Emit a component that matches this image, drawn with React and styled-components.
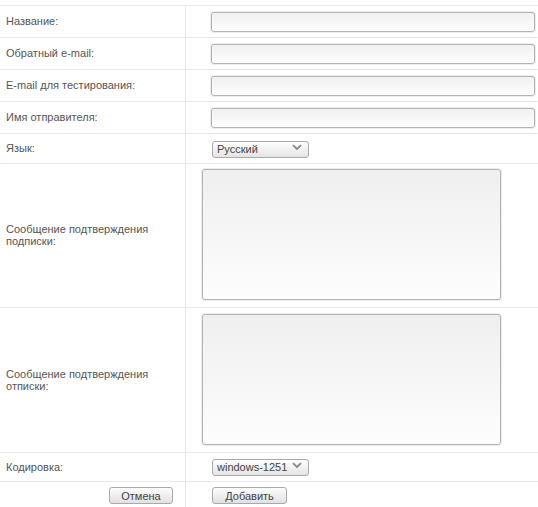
import React from "react";
import styled, { createGlobalStyle } from "styled-components";

const Global = createGlobalStyle`
  html, body { margin: 0; padding: 0; background: #fff; }
  body { font-family: "Liberation Sans", Arial, sans-serif; }
`;

const Form = styled.div`
  padding-top: 5px;
  width: 538px;
`;

const Row = styled.div`
  display: grid;
  grid-template-columns: 186px 1fr;
  height: ${(p) => p.$h}px;
  box-sizing: border-box;
  border-top: 1px solid #e8e8e8;
`;

const Label = styled.div`
  display: flex;
  align-items: center;
  justify-content: ${(p) => (p.$right ? "flex-end" : "flex-start")};
  padding: ${(p) => (p.$right ? "0 12px 0 0" : "0 0 1px 6px")};
  border-right: 1px solid #e8e8e8;
  font-size: 11px;
  line-height: 12px;
  color: #555;
`;

const Field = styled.div`
  display: flex;
  align-items: ${(p) => (p.$top ? "flex-start" : "center")};
  padding-left: ${(p) => p.$pl ?? 25}px;
  padding-top: ${(p) => p.$pt ?? 0}px;
  padding-bottom: ${(p) => p.$pb ?? 0}px;
`;

const TextInput = styled.input`
  box-sizing: border-box;
  width: 324px;
  height: 20px;
  margin: 0;
  border: 1px solid #b3b3b3;
  border-radius: 3px;
  box-shadow: 0 0 0 1px #ececec;
  background: linear-gradient(#f1f1f1, #fdfdfd);
  outline: none;
`;

const TextArea = styled.textarea`
  box-sizing: border-box;
  width: 299px;
  height: 131px;
  margin: 0;
  resize: none;
  border: 1px solid #b3b3b3;
  border-radius: 3px;
  box-shadow: 0 0 0 1px #ececec;
  background: linear-gradient(#efefef, #fdfdfd);
  outline: none;
`;

const SelectWrap = styled.div`
  position: relative;
  width: 97px;
  height: 17px;
  margin-left: 1px;
`;

const Select = styled.select`
  appearance: none;
  -webkit-appearance: none;
  box-sizing: border-box;
  width: 97px;
  height: 17px;
  margin: 0;
  padding: 0 0 0 4px;
  border: 1px solid #aaa;
  border-radius: 3px;
  background: linear-gradient(#fefefe, #e4e4e4);
  font-family: "Liberation Sans", Arial, sans-serif;
  font-size: 11px;
  line-height: 15px;
  color: #444;
  outline: none;
`;

const Chevron = styled.svg`
  position: absolute;
  right: 7px;
  top: 5px;
  pointer-events: none;
`;

const Button = styled.button`
  box-sizing: border-box;
  width: ${(p) => p.$w}px;
  height: 17px;
  margin: 0;
  padding: 0;
  border: 1px solid #a9a9a9;
  border-radius: 3px;
  background: linear-gradient(#fdfdfd, #e1e1e1);
  font-family: "Liberation Sans", Arial, sans-serif;
  font-size: 11px;
  color: #444;
`;

const Dropdown = ({ value }) => (
  <SelectWrap>
    <Select defaultValue={value}>
      <option>{value}</option>
    </Select>
    <Chevron width="10" height="7" viewBox="0 0 10 7">
      <path d="M1 1.2 L5 5 L9 1.2" fill="none" stroke="#888" strokeWidth="1.8" />
    </Chevron>
  </SelectWrap>
);

const textRows = ["Название:", "Обратный e-mail:", "E-mail для тестирования:", "Имя отправителя:"];

export default function App() {
  return (
    <>
      <Global />
      <Form>
        {textRows.map((t) => (
          <Row key={t} $h={32}>
            <Label>{t}</Label>
            <Field>
              <TextInput type="text" />
            </Field>
          </Row>
        ))}
        <Row $h={30}>
          <Label>Язык:</Label>
          <Field $pb={3}>
            <Dropdown value="Русский" />
          </Field>
        </Row>
        <Row $h={144}>
          <Label>
            Сообщение подтверждения
            <br />
            подписки:
          </Label>
          <Field $top $pl={16} $pt={5}>
            <TextArea />
          </Field>
        </Row>
        <Row $h={145}>
          <Label>
            Сообщение подтверждения
            <br />
            отписки:
          </Label>
          <Field $top $pl={16} $pt={6}>
            <TextArea />
          </Field>
        </Row>
        <Row $h={29}>
          <Label>Кодировка:</Label>
          <Field $pb={3}>
            <Dropdown value="windows-1251" />
          </Field>
        </Row>
        <Row $h={28}>
          <Label $right>
            <Button $w={64}>Отмена</Button>
          </Label>
          <Field $pl={26}>
            <Button $w={75}>Добавить</Button>
          </Field>
        </Row>
      </Form>
    </>
  );
}
